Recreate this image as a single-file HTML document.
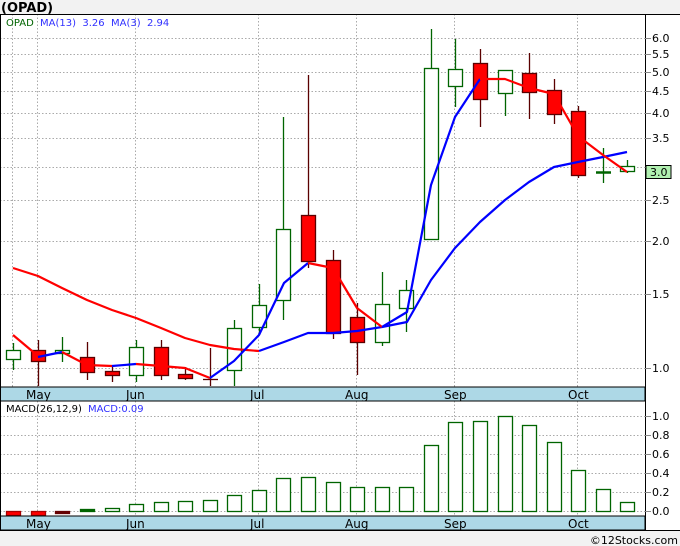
<!DOCTYPE html>
<html><head><meta charset="utf-8"><style>
html,body{margin:0;padding:0;background:#f2f2f2;width:680px;height:546px;overflow:hidden}
svg{display:block;font-family:"DejaVu Sans","Liberation Sans",sans-serif}
</style></head><body>
<svg width="680" height="546" viewBox="0 0 680 546" xmlns="http://www.w3.org/2000/svg">
<rect x="0" y="0" width="680" height="546" fill="#f2f2f2"/>
<text x="1" y="12" font-size="13" font-weight="bold" fill="#000">(OPAD)</text>
<rect x="0" y="14" width="680" height="517" fill="#fff"/>
<g stroke="#aaa" stroke-dasharray="1.5,2" stroke-width="1">
<line x1="0" y1="38.5" x2="645" y2="38.5"/><line x1="0" y1="54.5" x2="645" y2="54.5"/>
<line x1="0" y1="72.5" x2="645" y2="72.5"/><line x1="0" y1="91.5" x2="645" y2="91.5"/>
<line x1="0" y1="113.5" x2="645" y2="113.5"/><line x1="0" y1="138.5" x2="645" y2="138.5"/>
<line x1="0" y1="167.5" x2="645" y2="167.5"/><line x1="0" y1="200.5" x2="645" y2="200.5"/>
<line x1="0" y1="241.5" x2="645" y2="241.5"/><line x1="0" y1="294.5" x2="645" y2="294.5"/>
<line x1="0" y1="368.5" x2="645" y2="368.5"/>
<line x1="12.5" y1="14" x2="12.5" y2="387"/>
<line x1="37.5" y1="14" x2="37.5" y2="387"/><line x1="135.5" y1="14" x2="135.5" y2="387"/>
<line x1="258.5" y1="14" x2="258.5" y2="387"/><line x1="356.5" y1="14" x2="356.5" y2="387"/>
<line x1="454.5" y1="14" x2="454.5" y2="387"/><line x1="577.5" y1="14" x2="577.5" y2="387"/>
<line x1="0" y1="416.5" x2="645" y2="416.5"/><line x1="0" y1="435.5" x2="645" y2="435.5"/>
<line x1="0" y1="454.5" x2="645" y2="454.5"/><line x1="0" y1="473.5" x2="645" y2="473.5"/>
<line x1="0" y1="492.5" x2="645" y2="492.5"/><line x1="0" y1="511.5" x2="645" y2="511.5"/>
<line x1="37.5" y1="401" x2="37.5" y2="516"/><line x1="135.5" y1="401" x2="135.5" y2="516"/>
<line x1="258.5" y1="401" x2="258.5" y2="516"/><line x1="356.5" y1="401" x2="356.5" y2="516"/>
<line x1="454.5" y1="401" x2="454.5" y2="516"/><line x1="577.5" y1="401" x2="577.5" y2="516"/>
</g>
<text x="6" y="26" font-size="10" fill="#006400">OPAD</text>
<text x="40" y="26" font-size="10" fill="#3030ff" xml:space="preserve">MA(13)  3.26  MA(3)  2.94</text>
<g stroke-width="1.3">
<g stroke="#006400" fill="#fff">
<line x1="13.5" y1="343" x2="13.5" y2="370"/><rect x="6.5" y="350.5" width="14" height="9"/>
<line x1="62.5" y1="337" x2="62.5" y2="362"/><rect x="55.5" y="350.5" width="14" height="3"/>
<line x1="136.5" y1="340" x2="136.5" y2="382"/><rect x="129.5" y="347.5" width="14" height="28"/>
<line x1="234.5" y1="320" x2="234.5" y2="386"/><rect x="227.5" y="328.5" width="14" height="42"/>
<line x1="259.5" y1="284" x2="259.5" y2="335"/><rect x="252.5" y="305.5" width="14" height="22"/>
<line x1="283.5" y1="117" x2="283.5" y2="320"/><rect x="276.5" y="229.5" width="14" height="71"/>
<line x1="382.5" y1="272" x2="382.5" y2="346"/><rect x="375.5" y="304.5" width="14" height="38"/>
<line x1="406.5" y1="280" x2="406.5" y2="332"/><rect x="399.5" y="290.5" width="14" height="18"/>
<line x1="431.5" y1="29" x2="431.5" y2="240"/><rect x="424.5" y="68.5" width="14" height="171"/>
<line x1="455.5" y1="39" x2="455.5" y2="107"/><rect x="448.5" y="69.5" width="14" height="17"/>
<line x1="505.5" y1="70" x2="505.5" y2="116"/><rect x="498.5" y="70.5" width="14" height="23"/>
<line x1="603.5" y1="148" x2="603.5" y2="183"/><line x1="596" y1="172.5" x2="611" y2="172.5" stroke-width="2.5"/>
<line x1="627.5" y1="160" x2="627.5" y2="173"/><rect x="620.5" y="166.5" width="14" height="5"/>
</g>
<g stroke="#5a0000" fill="#f00">
<line x1="38.5" y1="340" x2="38.5" y2="386"/><rect x="31.5" y="350.5" width="14" height="11"/>
<line x1="87.5" y1="342" x2="87.5" y2="380"/><rect x="80.5" y="357.5" width="14" height="15"/>
<line x1="112.5" y1="365" x2="112.5" y2="382"/><rect x="105.5" y="371.5" width="14" height="4"/>
<line x1="161.5" y1="340" x2="161.5" y2="380"/><rect x="154.5" y="347.5" width="14" height="28"/>
<line x1="185.5" y1="367" x2="185.5" y2="380"/><rect x="178.5" y="374.5" width="14" height="4"/>
<line x1="210.5" y1="348" x2="210.5" y2="386"/><line x1="203" y1="379.5" x2="218" y2="379.5"/>
<line x1="308.5" y1="75" x2="308.5" y2="268"/><rect x="301.5" y="215.5" width="14" height="46"/>
<line x1="333.5" y1="250" x2="333.5" y2="339"/><rect x="326.5" y="260.5" width="14" height="73"/>
<line x1="357.5" y1="303" x2="357.5" y2="375"/><rect x="350.5" y="317.5" width="14" height="25"/>
<line x1="480.5" y1="49" x2="480.5" y2="127"/><rect x="473.5" y="63.5" width="14" height="36"/>
<line x1="529.5" y1="53" x2="529.5" y2="119"/><rect x="522.5" y="73.5" width="14" height="19"/>
<line x1="554.5" y1="79" x2="554.5" y2="124"/><rect x="547.5" y="90.5" width="14" height="24"/>
<line x1="578.5" y1="106" x2="578.5" y2="178"/><rect x="571.5" y="111.5" width="14" height="64"/>
</g>
</g>
<g fill="none" stroke-width="2.2" stroke-linejoin="round">
<polyline stroke="#f00" points="13,268 38,276 62,288 87,300 112,310 136,318 161,328 185,338 210,345 234,349 259,351"/>
<polyline stroke="#00f" points="259,351 284,342 308,333 333,333 357,331 382,327 407,322 431,280 455,248 480,222 505,200 529,182 554,167 578,162 603,157 627,152"/>
<polyline stroke="#f00" points="13,335 38,356"/>
<polyline stroke="#00f" points="38,357 62,352"/>
<polyline stroke="#f00" points="62,352 87,365 112,366"/>
<polyline stroke="#00f" points="112,366 136,364"/>
<polyline stroke="#f00" points="136,364 161,366 185,368 210,378"/>
<polyline stroke="#00f" points="210,378 234,361 259,335 284,283 308,263"/>
<polyline stroke="#f00" points="308,263 333,268 357,308 382,327"/>
<polyline stroke="#00f" points="382,327 407,312 431,185 455,117 480,79"/>
<polyline stroke="#f00" points="480,79 505,79 529,88 554,94 578,136 603,155 627,172"/>
</g>
<rect x="0" y="387" width="645" height="14" fill="#add8e6" stroke="#000" stroke-width="1"/>
<g font-size="12" fill="#000">
<text x="26" y="399">May</text><text x="126" y="399">Jun</text><text x="250" y="399">Jul</text>
<text x="345" y="399">Aug</text><text x="444" y="399">Sep</text><text x="568" y="399">Oct</text>
</g>
<text x="6" y="412" font-size="10" fill="#000">MACD(26,12,9)</text>
<text x="88" y="412" font-size="10" fill="#3030ff">MACD:0.09</text>
<g stroke-width="1.3">
<g fill="#f00" stroke="#a00"><rect x="6.5" y="511.5" width="14" height="4"/><rect x="31.5" y="511.5" width="14" height="4"/><rect x="55.5" y="511.5" width="14" height="2" fill="#600" stroke="#600"/></g>
<g fill="#fff" stroke="#006400">
<rect x="80.5" y="509.5" width="14" height="2" fill="#006400"/>
<rect x="105.5" y="508.5" width="14" height="3"/>
<rect x="129.5" y="504.5" width="14" height="7"/>
<rect x="154.5" y="502.5" width="14" height="9"/>
<rect x="178.5" y="501.5" width="14" height="10"/>
<rect x="203.5" y="500.5" width="14" height="11"/>
<rect x="227.5" y="495.5" width="14" height="16"/>
<rect x="252.5" y="490.5" width="14" height="21"/>
<rect x="276.5" y="478.5" width="14" height="33"/>
<rect x="301.5" y="477.5" width="14" height="34"/>
<rect x="326.5" y="482.5" width="14" height="29"/>
<rect x="350.5" y="487.5" width="14" height="24"/>
<rect x="375.5" y="487.5" width="14" height="24"/>
<rect x="399.5" y="487.5" width="14" height="24"/>
<rect x="424.5" y="445.5" width="14" height="66"/>
<rect x="448.5" y="422.5" width="14" height="89"/>
<rect x="473.5" y="421.5" width="14" height="90"/>
<rect x="498.5" y="416.5" width="14" height="95"/>
<rect x="522.5" y="425.5" width="14" height="86"/>
<rect x="547.5" y="442.5" width="14" height="69"/>
<rect x="571.5" y="470.5" width="14" height="41"/>
<rect x="596.5" y="489.5" width="14" height="22"/>
<rect x="620.5" y="502.5" width="14" height="9"/>
</g></g>
<rect x="0" y="516" width="645" height="14" fill="#add8e6" stroke="#000" stroke-width="1"/>
<g font-size="12" fill="#000">
<text x="26" y="528">May</text><text x="126" y="528">Jun</text><text x="250" y="528">Jul</text>
<text x="345" y="528">Aug</text><text x="444" y="528">Sep</text><text x="568" y="528">Oct</text>
</g>
<rect x="0" y="531" width="680" height="15" fill="#f2f2f2"/>
<line x1="0" y1="530.5" x2="680" y2="530.5" stroke="#000"/>
<line x1="645.5" y1="14" x2="645.5" y2="531" stroke="#000"/>
<line x1="0" y1="14.5" x2="680" y2="14.5" stroke="#000"/>
<line x1="0.5" y1="14" x2="0.5" y2="531" stroke="#000"/>
<g stroke="#888" stroke-width="1">
<line x1="645" y1="38.5" x2="651" y2="38.5"/><line x1="645" y1="54.5" x2="651" y2="54.5"/>
<line x1="645" y1="72.5" x2="651" y2="72.5"/><line x1="645" y1="91.5" x2="651" y2="91.5"/>
<line x1="645" y1="113.5" x2="651" y2="113.5"/><line x1="645" y1="138.5" x2="651" y2="138.5"/>
<line x1="645" y1="167.5" x2="651" y2="167.5"/><line x1="645" y1="200.5" x2="651" y2="200.5"/>
<line x1="645" y1="241.5" x2="651" y2="241.5"/><line x1="645" y1="294.5" x2="651" y2="294.5"/>
<line x1="645" y1="368.5" x2="651" y2="368.5"/>
<line x1="645" y1="416.5" x2="651" y2="416.5"/><line x1="645" y1="435.5" x2="651" y2="435.5"/>
<line x1="645" y1="454.5" x2="651" y2="454.5"/><line x1="645" y1="473.5" x2="651" y2="473.5"/>
<line x1="645" y1="492.5" x2="651" y2="492.5"/><line x1="645" y1="511.5" x2="651" y2="511.5"/>
</g>
<g font-size="11" fill="#000">
<text x="652" y="42">6.0</text><text x="652" y="58">5.5</text><text x="652" y="76">5.0</text>
<text x="652" y="95">4.5</text><text x="652" y="117">4.0</text><text x="652" y="142">3.5</text>
<text x="652" y="204">2.5</text><text x="652" y="245">2.0</text>
<text x="652" y="298">1.5</text><text x="652" y="372">1.0</text>
<text x="652" y="420">1.0</text><text x="652" y="439">0.8</text><text x="652" y="458">0.6</text>
<text x="652" y="477">0.4</text><text x="652" y="496">0.2</text><text x="652" y="515">0.0</text>
</g>
<rect x="646" y="165.5" width="25" height="13" fill="#b0f0b0" stroke="#000"/>
<text x="650" y="176" font-size="11" fill="#000">3.0</text>
<text x="678" y="544" font-size="11" fill="#000" text-anchor="end">©12Stocks.com</text>
</svg>
</body></html>
